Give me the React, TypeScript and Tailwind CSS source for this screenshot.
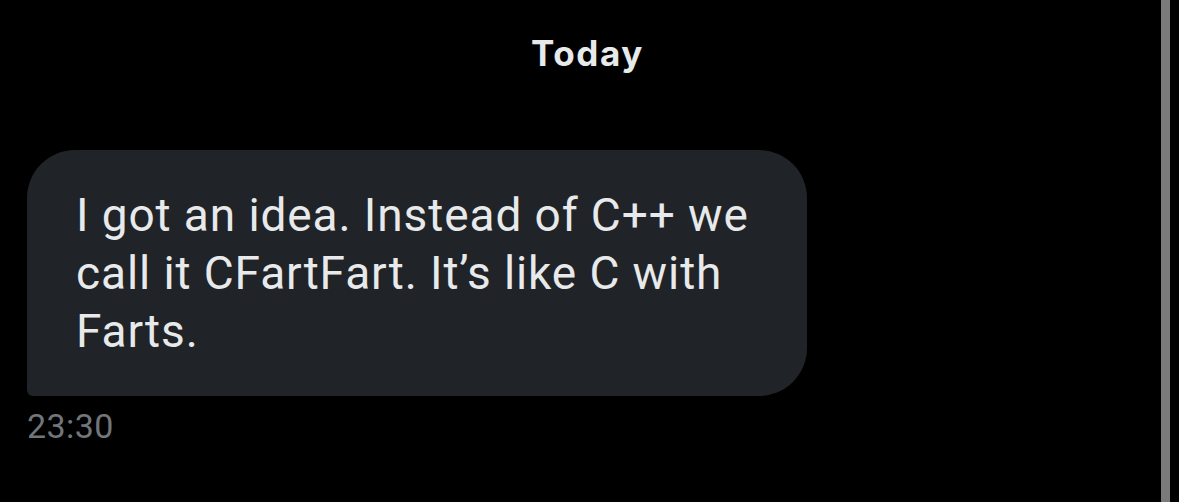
export default function App() {
  return (
    <div className="relative h-[502px] w-[1179px] overflow-hidden bg-black" style={{ fontFamily: 'Roboto, "Liberation Sans", sans-serif' }}>
      <div className="flex h-full">
        <div className="flex flex-1 flex-col">
          <div className="flex justify-center pt-[33px] pl-[14px]">
            <span className="font-['Inter',sans-serif] text-[35px] font-bold leading-[40px] tracking-[1.6px] text-[#e7e9ea]">Today</span>
          </div>
          <div className="mt-[77px] pl-[27px]">
            <div className="w-[780px] rounded-[48px] rounded-bl-[6px] bg-[#202327] pt-[36px] pb-[36px] pl-[49px] pr-[20px]">
              <p className="text-[46px] leading-[58px] tracking-[0.9px] text-[#e7e9ea]">
                I got an idea. Instead of C++ we
                <br />
                call it CFartFart. It’s like C with
                <br />
                Farts.
              </p>
            </div>
            <div className="mt-[10px] text-[34px] leading-[40px] tracking-[0.4px] text-[#71767b]">23:30</div>
          </div>
        </div>
        <div className="mr-[9px] w-[9px] bg-[#7a7a7a]" />
      </div>
    </div>
  );
}
